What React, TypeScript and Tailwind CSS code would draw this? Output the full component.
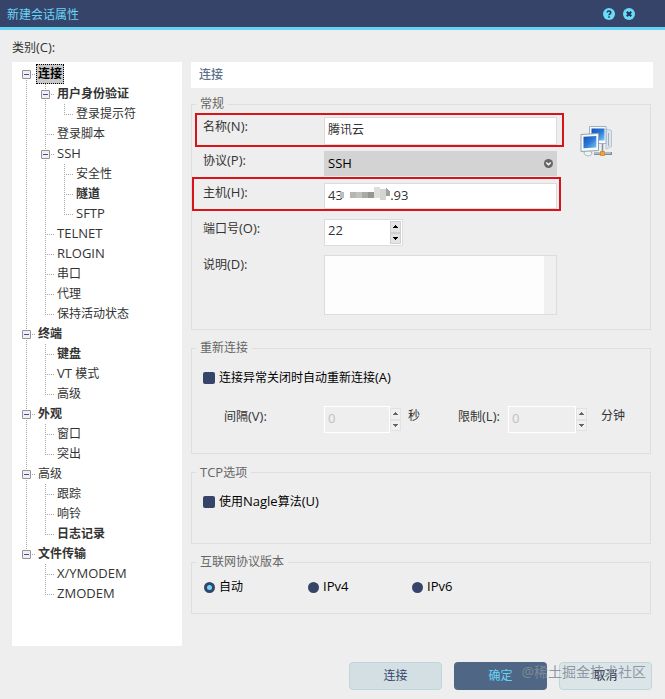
import { Fragment } from "react";
import type { ReactNode } from "react";

type TreeNode = {
  label: string;
  bold?: boolean;
  selected?: boolean;
  children?: TreeNode[];
};

const categories: TreeNode[] = [
  {
    label: "连接",
    bold: true,
    selected: true,
    children: [
      { label: "用户身份验证", bold: true, children: [{ label: "登录提示符" }] },
      { label: "登录脚本" },
      {
        label: "SSH",
        children: [{ label: "安全性" }, { label: "隧道", bold: true }, { label: "SFTP" }],
      },
      { label: "TELNET" },
      { label: "RLOGIN" },
      { label: "串口" },
      { label: "代理" },
      { label: "保持活动状态" },
    ],
  },
  {
    label: "终端",
    bold: true,
    children: [{ label: "键盘", bold: true }, { label: "VT 模式" }, { label: "高级" }],
  },
  { label: "外观", bold: true, children: [{ label: "窗口" }, { label: "突出" }] },
  {
    label: "高级",
    children: [{ label: "跟踪" }, { label: "响铃" }, { label: "日志记录", bold: true }],
  },
  {
    label: "文件传输",
    bold: true,
    children: [{ label: "X/YMODEM" }, { label: "ZMODEM" }],
  },
];

// latin runs are set one pixel larger than the chinese ones
function Mixed({ text }: { text: string }) {
  return (
    <>
      {text.split(/([\x20-\x7e]+)/).map((part, i) =>
        i % 2 ? (
          <span key={i} className="text-[13px]">{part}</span>
        ) : (
          <Fragment key={i}>{part}</Fragment>
        )
      )}
    </>
  );
}

const dotsDown = "w-px bg-[repeating-linear-gradient(to_bottom,#a8a8a8_0_1px,transparent_1px_2px)] ";
const dotsAcross = "h-px bg-[repeating-linear-gradient(to_right,#a8a8a8_0_1px,transparent_1px_2px)] ";

function Branch({ up, down, across, toggle }: { up?: boolean; down?: boolean; across?: boolean; toggle?: ReactNode }) {
  return (
    <span className="relative h-5 w-[19px] shrink-0">
      {up && <span className={dotsDown + "absolute left-[9px] top-0 h-[10px]"} />}
      {down && <span className={dotsDown + "absolute left-[9px] top-[10px] h-[10px]"} />}
      {across && <span className={dotsAcross + "absolute left-[9px] top-[10px] w-[9px]"} />}
      {toggle}
    </span>
  );
}

function Node({ node, lines, first, last }: { node: TreeNode; lines: boolean[]; first: boolean; last: boolean }) {
  return (
    <li>
      <div className="flex h-5 items-center">
        {lines.map((line, i) => (
          <Branch key={i} up={line} down={line} />
        ))}
        <Branch
          up={!first}
          down={!last}
          across
          toggle={
            node.children && (
              <button
                aria-label={"折叠 " + node.label}
                className="absolute left-[5px] top-[6px] flex h-[9px] w-[9px] items-center justify-center rounded-[1px] border border-[#929292] bg-[#f0f0f4]"
              >
                <span className="h-px w-[5px] bg-[#4b4b9c]" />
              </button>
            )
          }
        />
        <span
          className={
            (node.selected ? "border-black bg-[#c9c9c9] text-black " : "border-transparent ") +
            (node.bold ? "font-bold " : "") +
            "flex h-5 items-center whitespace-nowrap border border-dotted px-px"
          }
        >
          <span><Mixed text={node.label} /></span>
        </span>
      </div>
      {node.children && (
        <ul>
          {node.children.map((child, i) => (
            <Node
              key={child.label}
              node={child}
              lines={[...lines, !last]}
              first={false}
              last={i === node.children!.length - 1}
            />
          ))}
        </ul>
      )}
    </li>
  );
}

function Group({ title, className, children }: { title: string; className: string; children: ReactNode }) {
  return (
    <fieldset className={"mr-0.5 min-w-0 border border-[#dcdfdf] pl-[11px] " + className}>
      <legend className="ml-[-7px] px-1 leading-4 text-[#666]">
        <Mixed text={title} />
      </legend>
      {children}
    </fieldset>
  );
}

function Row({ id, label, children }: { id: string; label: string; children: ReactNode }) {
  return (
    <div className="relative flex items-start">
      <label htmlFor={id} className="w-[121px] shrink-0 leading-[18px]">
        <Mixed text={label} />
      </label>
      {children}
    </div>
  );
}

function Arrow({ up }: { up?: boolean }) {
  return (
    <svg className="h-[3px] w-[5px]" viewBox="0 0 5 3" fill="currentColor" shapeRendering="crispEdges">
      <path d={up ? "M2 0h1v1h1v1h1v1H0V2h1V1h1z" : "M0 0h5v1H4v1H3v1H2V2H1V1H0z"} />
    </svg>
  );
}

function Spinner({ id, value, disabled, width }: { id: string; value: string; disabled?: boolean; width: string }) {
  const button = disabled
    ? "border-[#e2e2e2] bg-[#f0f0f0] text-[#666]"
    : "border-[#d0d0d0] bg-[#e4e4e4] text-black";
  return (
    <div className={(disabled ? "border-transparent " : "border-[#dcdcdc] bg-white ") + "flex h-[27px] shrink-0 border " + width}>
      <input
        id={id}
        defaultValue={value}
        disabled={disabled}
        className={
          (disabled ? "-my-px -ml-px border border-white text-[#c0c0c0] " : "") +
          "min-w-0 flex-1 pb-1 pl-[3px] text-[13px] outline-none"
        }
      />
      <div className="mr-px flex w-[11px] flex-col py-px">
        <button aria-label="增加" disabled={disabled} className={"flex flex-1 items-center justify-center border " + button}>
          <Arrow up />
        </button>
        <button aria-label="减少" disabled={disabled} className={"flex flex-1 items-center justify-center border " + button}>
          <Arrow />
        </button>
      </div>
    </div>
  );
}

function Check({ label }: { label: string }) {
  return (
    <label className="flex h-5 items-center gap-1 text-black">
      <input type="checkbox" className="h-3 w-3 appearance-none rounded-[2px] bg-[#36446a]" />
      <span><Mixed text={label} /></span>
    </label>
  );
}

function Radio({ label, checked }: { label: string; checked?: boolean }) {
  return (
    <label className="flex h-5 items-center gap-1 text-black">
      <input
        type="radio"
        name="ip"
        defaultChecked={checked}
        className="h-[11px] w-[11px] appearance-none rounded-full border-[3px] border-[#36446a] bg-[#36446a] checked:bg-[#6bdcf8]"
      />
      <span><Mixed text={label} /></span>
    </label>
  );
}

function Computers() {
  return (
    <svg className="mt-[13px] h-[34px] w-[33px] shrink-0" viewBox="0 0 33 34">
      <defs>
        <linearGradient id="screen" x1="0" y1="0" x2="1" y2="1">
          <stop offset="0" stopColor="#1550b4" />
          <stop offset=".5" stopColor="#2c78d6" />
          <stop offset="1" stopColor="#7cc4f4" />
        </linearGradient>
      </defs>
      <path d="M26 4l5.500 1.500v16L26 24z" fill="#dde6ed" stroke="#a4b5c2" strokeWidth=".7" />
      <path d="M28.500 8v13" stroke="#9db0be" />
      <path d="M9.500 1.500h16.500v17H9.500z" fill="#f6fafc" stroke="#9fb2c0" />
      <path d="M11.500 3.500h13v12h-13z" fill="url(#screen)" />
      <path d="M22.500 19v8" stroke="#82939f" strokeWidth="1.500" />
      <path d="M14 28.500h18" stroke="#7c8e9a" strokeWidth="3" />
      <path d="M14 28h17" stroke="#e0e8ed" />
      <path d="M4 27c1-2 3-1.500 5-2l3 3c0 4-8 4-8-1z" fill="#eef2f5" stroke="#a3b2bd" />
      <path d="M1 9.500L18.500 8.500v17L1 26.500z" fill="#f8fbfd" stroke="#8ea4b6" />
      <path d="M3.500 11.800l12.800-.8v11.500l-12.800.8z" fill="url(#screen)" />
      <path d="M20.500 26.500h4v4h-4z" fill="#f9a51f" stroke="#c9821c" strokeWidth=".7" />
    </svg>
  );
}

// blurred-out middle part of the host address
function Mosaic() {
  return (
    <svg className="pointer-events-none absolute left-[137px] top-px h-[18px] w-[52px]" viewBox="0 0 52 18" shapeRendering="crispEdges">
      <path d="M0 8h4v6H0z" fill="#b4bec8" />
      <path d="M10 8h6v6h-6z" fill="#b5b5b5" />
      <path d="M16 8h6v6h-6z" fill="#c2c0bd" />
      <path d="M22 8h6v6h-6z" fill="#a9a9a6" />
      <path d="M28 8h6v6h-6z" fill="#94968f" />
      <path d="M34 3h6v11h-6z" fill="#dedede" />
      <path d="M40 5h6v11h-6z" fill="#d6d4d0" />
      <path d="M46 3l4 5v4h-4z" fill="#9ea3a3" />
    </svg>
  );
}

function App() {
  return (
    <div className="min-h-screen bg-[#eee] pb-[9px] font-['Open_Sans','Noto_Sans_CJK_SC',sans-serif] text-xs text-[#333]">
      <header className="flex h-[30px] items-center justify-between border-b-[3px] border-[#66d5f5] bg-[#36446a] pl-[7px] pr-[30px]">
        <h1 className="pt-0.5 text-[#66d5f5]">新建会话属性</h1>
        <div className="flex gap-2">
          <button aria-label="帮助">
            <svg className="h-3 w-3" viewBox="0 0 12 12">
              <circle cx="6" cy="6" r="6" fill="#6bdcf8" />
              <path d="M4.200 4.600C4.200 2.600 7.800 2.600 7.800 4.600 7.800 5.800 6 5.800 6 7.300M6 8.200v1.500" fill="none" stroke="#26335c" strokeWidth="1.500" />
            </svg>
          </button>
          <button aria-label="关闭">
            <svg className="h-3 w-3" viewBox="0 0 12 12">
              <circle cx="6" cy="6" r="6" fill="#6bdcf8" />
              <path d="M3.800 3.800l4.400 4.400M8.200 3.800L3.800 8.200" stroke="#26335c" strokeWidth="2.200" />
            </svg>
          </button>
        </div>
      </header>

      <main className="px-3 pt-[7px]">
        <h2 className="mb-1 leading-5"><Mixed text="类别(C):" /></h2>
        <div className="flex gap-[9px]">
          <nav className="w-[170px] shrink-0 bg-white pl-[5px] pt-0.5">
            <ul>
              {categories.map((node, i) => (
                <Node key={node.label} node={node} lines={[]} first={i === 0} last={i === categories.length - 1} />
              ))}
            </ul>
          </nav>

          <section className="min-w-0 flex-1 pb-8">
            <h2 className="mb-2 flex h-[26px] items-center bg-white pl-2 font-medium text-[#5c728c]">连接</h2>
            <div className="flex flex-col gap-[10px]">
              <Group title="常规" className="pb-[14px]">
                <div className="flex">
                  <div className="flex min-w-0 flex-1 flex-col pt-[5px]">
                    <Row id="name" label="名称(N):">
                      <input id="name" defaultValue="腾讯云" className="h-7 min-w-0 flex-1 border border-[#dcdcdc] bg-white pb-1 pl-[3px] outline-none" />
                      <span className="pointer-events-none absolute -bottom-0.5 -left-2 -right-[7px] -top-1 border-2 border-[#d8141a]" />
                    </Row>
                    <div className="h-1.5" />
                    <Row id="protocol" label="协议(P):">
                      <select id="protocol" className="h-[25px] min-w-0 flex-1 appearance-none bg-[#d3d3d3] pl-1 text-[13px] text-black outline-none">
                        <option>SSH</option>
                      </select>
                      <svg className="pointer-events-none absolute right-1 top-2 h-[9px] w-[9px]" viewBox="0 0 9 9">
                        <circle cx="4.500" cy="4.500" r="4.500" fill="#666" />
                        <path d="M2.300 3.500l2.200 2.200 2.200-2.200" fill="none" stroke="#fff" strokeWidth="1.500" />
                      </svg>
                    </Row>
                    <div className="h-[7px]" />
                    <Row id="host" label="主机(H):">
                      <input
                        id="host"
                        defaultValue={"43" + "\u00a0".repeat(14) + ".93"}
                        className="h-[26px] min-w-0 flex-1 border border-[#dcdcdc] bg-white pb-[3px] pl-[3px] text-[13px] outline-none"
                      />
                      <Mosaic />
                      <span className="pointer-events-none absolute -bottom-0.5 -left-[11px] -right-1 -top-1.5 border-2 border-[#d8141a]" />
                    </Row>
                    <div className="h-[10px]" />
                    <Row id="port" label="端口号(O):">
                      <Spinner id="port" value="22" width="w-[79px]" />
                    </Row>
                    <div className="h-[9px]" />
                    <Row id="note" label="说明(D):">
                      <div className="flex h-[60px] min-w-0 flex-1 border border-[#dcdcdc] bg-[#fdfdfd]">
                        <textarea id="note" className="min-w-0 flex-1 resize-none outline-none" />
                        <span className="w-3 bg-[#f0f0f0]" />
                      </div>
                    </Row>
                  </div>
                  <div className="ml-[23px] mr-[37px]">
                    <Computers />
                  </div>
                </div>
              </Group>

              <Group title="重新连接" className="h-[114px] pt-3">
                <Check label="连接异常关闭时自动重新连接(A)" />
                <div className="mt-[18px] flex items-start pl-[21px] leading-5">
                  <label htmlFor="interval" className="w-[100px] shrink-0"><Mixed text="间隔(V):" /></label>
                  <Spinner id="interval" value="0" disabled width="w-[79px]" />
                  <span className="ml-[5px] w-[50px]">秒</span>
                  <label htmlFor="limit" className="w-[50px] shrink-0"><Mixed text="限制(L):" /></label>
                  <Spinner id="limit" value="0" disabled width="w-[81px]" />
                  <span className="ml-3">分钟</span>
                </div>
              </Group>

              <Group title="TCP选项" className="h-20 pt-[11px]">
                <Check label="使用Nagle算法(U)" />
              </Group>

              <Group title="互联网协议版本" className="h-[60px] pt-[7px]">
                <div className="grid grid-cols-[repeat(3,104px)] pl-px">
                  <Radio label="自动" checked />
                  <Radio label="IPv4" />
                  <Radio label="IPv6" />
                </div>
              </Group>
            </div>
          </section>
        </div>

        <footer className="relative mt-4 flex justify-end gap-3 pr-px">
          <button className="h-7 w-[93px] rounded-sm border border-[#bdd5db] bg-[#d3dfe3] text-[#36446a]">连接</button>
          <button className="h-7 w-[93px] rounded-sm bg-[#4f6785] text-[#66d5f5]">确定</button>
          <button className="h-7 w-[93px] rounded-sm border border-[#bdd5db] bg-[#dbe5e8] text-[#222b44]">取消</button>
          <span className="pointer-events-none absolute right-[7px] top-0 whitespace-nowrap text-sm text-[#858c98]/90">@稀土掘金技术社区</span>
        </footer>
      </main>
    </div>
  );
}

export default App;
